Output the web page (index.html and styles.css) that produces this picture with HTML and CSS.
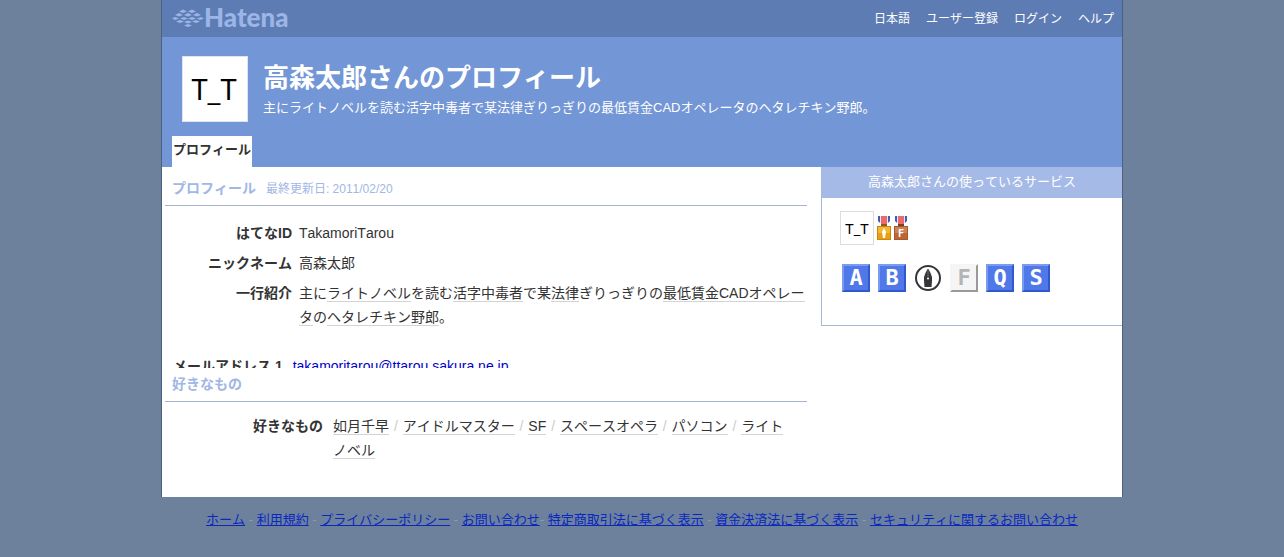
FILE: index.html
```html
<!DOCTYPE html>
<html lang="ja">
<head>
    <meta charset="UTF-8">
    <meta name="viewport" content="width=device-width, initial-scale=1.0">
    <title>高森太郎さんのプロフィール - はてな</title>
    <link rel="stylesheet" href="styles.css">
</head>
<body>
    <div class="container">
        <!-- グローバルヘッダ -->
        <div class="global-header">
            <a href="#" class="logo" aria-label="Hatena">
                <svg width="130" height="37" viewBox="0 -4 130 37" fill="#9bb6e6">
                    <g class="logo-mark">
                        <path d="M7 7.500l4-2 4 2-4 1.500zM16 7.500l4-2 4 2-4 1.500z"/>
                        <path d="M3 11l4-2 4 2-4 1.500zM12 11l4-2 4 2-4 1.500zM21 11l4-2 4 2-4 1.500z"/>
                        <path d="M0 14.500l3-1.500 4 1.500-4 1.500zM8 14.500l4-1.500 4 1.500-4 1.500zM16 14.500l4-1.500 4 1.500-4 1.500zM25 14.500l4-1.500 3 1.500-4 1.500z"/>
                        <path d="M4 17.500l4-1.500 4 1.500-4 1.500zM12 18l4-1.500 4 1.500-4 1.500zM20 17.500l4-1.500 4 1.500-4 1.500z"/>
                        <path d="M12 21.500l4-1.500 4 1.500-4 1.500z"/>
                    </g>
                    <text x="32" y="23" class="logo-text">Hatena</text>
                </svg>
            </a>
            <ul class="global-nav">
                <li><a href="#">日本語</a></li>
                <li><a href="#">ユーザー登録</a></li>
                <li><a href="#">ログイン</a></li>
                <li><a href="#">ヘルプ</a></li>
            </ul>
        </div>

        <!-- ユーザーヘッダ -->
        <div class="user-header">
            <div class="user-info">
                <svg class="avatar" viewBox="0 0 64 64" role="img" aria-label="TakamoriTarou">
                    <text x="31" y="43" class="avatar-text">T_T</text>
                </svg>
                <div class="user-title">
                    <h1>高森太郎さんのプロフィール</h1>
                    <p>主にライトノベルを読む活字中毒者で某法律ぎりっぎりの最低賃金CADオペレータのヘタレチキン野郎。</p>
                </div>
            </div>
            <ul class="tabs">
                <li><a href="#">プロフィール</a></li>
            </ul>
        </div>

        <div class="content">
            <div class="main">
                <div class="section section-profile">
                    <h2>プロフィール <span class="updated">最終更新日: 2011/02/20</span></h2>
                    <table class="profile">
                        <tr>
                            <th>はてなID</th>
                            <td>TakamoriTarou</td>
                        </tr>
                        <tr>
                            <th>ニックネーム</th>
                            <td>高森太郎</td>
                        </tr>
                        <tr>
                            <th>一行紹介</th>
                            <td>主に<a href="#" class="keyword">ライトノベル</a>を読む<a href="#" class="keyword">活字中毒者</a>で某<a href="#" class="keyword">法律</a>ぎりっぎりの<a href="#" class="keyword">最低賃金</a><a href="#" class="keyword">CADオペレータ</a>の<a href="#" class="keyword">ヘタレ</a><a href="#" class="keyword">チキン</a><a href="#" class="keyword">野郎</a>。</td>
                        </tr>
                    </table>
                    <table class="address">
                        <tr>
                            <th>メールアドレス 1</th>
                            <td><a href="#">takamoritarou@ttarou.sakura.ne.jp</a></td>
                        </tr>
                    </table>
                </div>
                <div class="section">
                    <h2>好きなもの</h2>
                    <table class="likes">
                        <tr>
                            <th>好きなもの</th>
                            <td><a href="#" class="keyword">如月千早</a> <i>/</i> <a href="#" class="keyword">アイドルマスター</a> <i>/</i> <a href="#" class="keyword">SF</a> <i>/</i> <a href="#" class="keyword">スペースオペラ</a> <i>/</i> <a href="#" class="keyword">パソコン</a> <i>/</i> <a href="#" class="keyword">ライトノベル</a></td>
                        </tr>
                    </table>
                </div>
            </div>

            <!-- 使っているサービス -->
            <div class="sidebar">
                <h2>高森太郎さんの使っているサービス</h2>
                <div class="medals">
                    <svg class="avatar-small" viewBox="0 0 32 32" role="img" aria-label="TakamoriTarou">
                        <text x="16" y="22" class="avatar-text-small">T_T</text>
                    </svg>
                    <svg class="medal" viewBox="0 0 14 24">
                        <path d="M1 0h3v5l-1 2-2-2z" fill="#3c5fb4"/>
                        <path d="M10 0h3v5l-2 2-1-2z" fill="#3c5fb4"/>
                        <path d="M3 0h1v7H3zM10 0h1v7h-1z" fill="#dfe6f5"/>
                        <path d="M4 0h6v9H4z" fill="#ee6a6a"/>
                        <path d="M4 8h6v2H4z" fill="#8a5a20"/>
                        <path d="M0 10h14v14H0z" fill="#cf8608"/>
                        <path d="M1 11h12v6H1z" fill="#f3b73a"/>
                        <path d="M1 17h12v6H1z" fill="#ea9f10"/>
                        <path d="M7 12l2 4-1 6H6l-1-6z" fill="#fff"/>
                    </svg>
                    <svg class="medal" viewBox="0 0 14 24">
                        <path d="M1 0h3v5l-1 2-2-2z" fill="#3c5fb4"/>
                        <path d="M10 0h3v5l-2 2-1-2z" fill="#3c5fb4"/>
                        <path d="M3 0h1v7H3zM10 0h1v7h-1z" fill="#dfe6f5"/>
                        <path d="M4 0h6v9H4z" fill="#ee6a6a"/>
                        <path d="M4 8h6v2H4z" fill="#7a4022"/>
                        <path d="M0 10h14v14H0z" fill="#a9582e"/>
                        <path d="M1 11h12v6H1z" fill="#cd8257"/>
                        <path d="M1 17h12v6H1z" fill="#bb6636"/>
                        <text x="7" y="21" class="medal-text">F</text>
                    </svg>
                </div>
                <div class="services">
                    <a href="#" class="service">A</a>
                    <a href="#" class="service">B</a>
                    <a href="#" class="service-blog" aria-label="はてなブログ">
                        <svg width="28" height="28" viewBox="0 0 28 28">
                            <circle cx="14" cy="14" r="12" fill="#fff" stroke="#35363a" stroke-width="2"/>
                            <path d="M13.500 5h1l2 4 1.500 4v4l-.5 6h-7l-.5-6v-4l1.500-4z" fill="#35363a"/>
                            <path d="M14 5v8" stroke="#9a9a9c" stroke-width=".5"/>
                            <circle cx="14" cy="14.500" r="1" fill="#fff"/>
                        </svg>
                    </a>
                    <a href="#" class="service service-off">F</a>
                    <a href="#" class="service">Q</a>
                    <a href="#" class="service">S</a>
                </div>
            </div>
        </div>
    </div>

    <div class="footer">
        <a href="#">ホーム</a> - <a href="#">利用規約</a> - <a href="#">プライバシーポリシー</a> - <a href="#">お問い合わせ</a>- <a href="#">特定商取引法に基づく表示</a> - <a href="#">資金決済法に基づく表示</a> - <a href="#">セキュリティに関するお問い合わせ</a>
    </div>
</body>
</html>
```
FILE: styles.css
```css
* {
    margin: 0;
    padding: 0;
    box-sizing: border-box;
}

body {
    background: #6d819c;
    color: #333;
    font-family: "Liberation Sans", "Noto Sans CJK JP", sans-serif;
    font-size: 14px;
    font-kerning: none;
    line-height: 24px;
}

ul {
    list-style: none;
}

svg {
    display: block;
}

.container {
    max-width: 962px;
    margin: 0 auto;
    background: #fff;
    border: solid #4c607f;
    border-width: 0 1px;
}

/* グローバルヘッダ */
.global-header {
    display: flex;
    justify-content: space-between;
    align-items: center;
    height: 37px;
    padding: 0 8px 0 10px;
    background: #5d7cb3;
}

.logo-text {
    font: 900 26px Lato, sans-serif;
}

.global-nav {
    display: flex;
    gap: 16px;
    font-size: 12px;
}

.global-nav a {
    color: #fff;
    text-decoration: none;
}

/* ユーザーヘッダ */
.user-header {
    padding: 19px 10px 0;
    background: #7396d6;
    color: #fff;
}

.user-info {
    display: flex;
    gap: 15px;
    padding: 0 10px;
    margin-bottom: 14px;
}

.avatar {
    flex: none;
    width: 66px;
    height: 66px;
    background: #fff;
    border: 1px solid #dde4f0;
}

.avatar-text {
    font: 29px "Noto Sans", sans-serif;
    text-anchor: middle;
}

.user-title h1 {
    padding-top: 4px;
    font-size: 26px;
    line-height: 36px;
}

.user-title p {
    font-size: 13px;
}

.tabs {
    display: flex;
}

.tabs a {
    display: block;
    height: 31px;
    padding: 2px 1px;
    background: #fff;
    color: #333;
    font-size: 13px;
    font-weight: bold;
    text-decoration: none;
}

/* 本文 */
.content {
    display: flex;
    gap: 14px;
    align-items: flex-start;
}

.main {
    flex: 1;
    padding: 0 0 35px 3px;
}

.section h2 {
    padding: 4px 7px 5px;
    border-bottom: 1px solid #a5b4cf;
    color: #a1b7e4;
    font-size: 14px;
}

.section-profile {
    height: 201px;
    overflow: hidden;
}

.section-profile h2 {
    padding: 9px 7px 4px;
}

.section .updated {
    margin-left: 6px;
    font-size: 12px;
    font-weight: normal;
}

table {
    border-collapse: collapse;
}

th {
    text-align: right;
    vertical-align: top;
    white-space: nowrap;
}

td {
    vertical-align: top;
}

.profile {
    width: 100%;
    margin: 12px 0 22px;
}

.profile th {
    width: 134px;
    padding: 3px 7px 3px 0;
}

.profile td {
    padding: 3px 0;
}

.address {
    margin-left: 8px;
}

.address td {
    padding-left: 10px;
}

.address a {
    color: #00c;
}

.likes {
    width: 100%;
    margin-top: 12px;
}

.likes th {
    width: 168px;
    padding-right: 10px;
}

.likes td {
    padding-right: 16px;
}

.likes i {
    margin: 0 1px;
    color: #ccc;
    font-style: normal;
}

.keyword {
    border-bottom: 1px solid #d4d4d4;
    color: #333;
    text-decoration: none;
}

/* サイドバー */
.sidebar {
    width: 301px;
    padding-bottom: 33px;
    border: solid #a5b9d6;
    border-width: 0 0 1px 1px;
}

.sidebar h2 {
    padding-bottom: 2px;
    background: #a5bae6;
    color: #fff;
    font-size: 13px;
    font-weight: normal;
    line-height: 29px;
    text-align: center;
}

.medals {
    display: flex;
    align-items: center;
    gap: 3px;
    padding: 13px 18px 19px;
}

.avatar-small {
    width: 34px;
    height: 34px;
    border: 1px solid #ddd;
}

.avatar-text-small {
    font: 15px "Noto Sans", sans-serif;
    text-anchor: middle;
}

.medal {
    width: 14px;
    height: 24px;
}

.medal-text {
    fill: #fff;
    font: bold 10px "DejaVu Sans Mono", monospace;
    text-anchor: middle;
}

.services {
    display: flex;
    gap: 8px;
    padding: 0 20px;
}

.service {
    width: 28px;
    height: 28px;
    background: #5078e8;
    border: 2px solid;
    border-color: #7a9cf0 #2f59cc #2f59cc #7a9cf0;
    color: #fff;
    font: bold 22px/24px "DejaVu Sans Mono", monospace;
    text-align: center;
    text-decoration: none;
}

.service-off {
    background: #f5f5f5;
    border-color: #f5f5f5 #999 #999 #f5f5f5;
    color: #b4b4b4;
}

/* フッタ */
.footer {
    padding: 11px 0 24px;
    color: #8f9cae;
    font-size: 13px;
    text-align: center;
}

.footer a {
    color: #0a28c0;
}
```
